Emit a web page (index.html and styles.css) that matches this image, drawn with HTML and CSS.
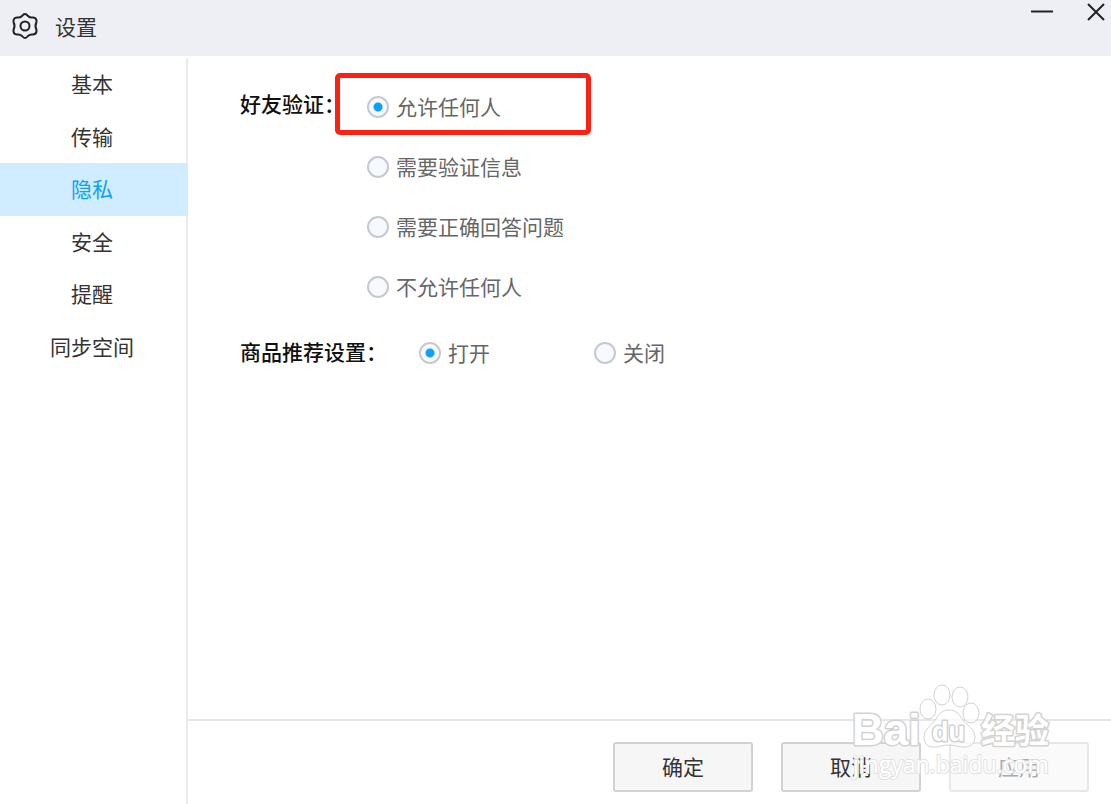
FILE: index.html
```html
<!DOCTYPE html>
<html lang="zh-CN">
<head>
  <meta charset="UTF-8" />
  <meta name="viewport" content="width=device-width, initial-scale=1.0" />
  <title>设置</title>
  <link rel="stylesheet" href="styles.css">
</head>
<body>
  <div class="window">
    <header class="titlebar">
      <svg class="gear" viewBox="0 0 28 28" aria-hidden="true">
        <path d="M11 4Q14 0 17 4Q19 6 22 5.500Q26 6 25.500 10Q23.500 14 25.500 18Q26 22 22 22.500Q19 22 17 24Q14 28 11 24Q9 22 6 22.500Q2 22 2.500 18Q4.500 14 2.500 10Q2 6 6 5.500Q9 6 11 4z" />
        <circle cx="14" cy="14" r="4.500" />
      </svg>
      <h1>设置</h1>
      <div class="window-buttons">
        <button type="button" aria-label="最小化">
          <svg viewBox="0 0 24 24"><path d="M1 11.500h22" /></svg>
        </button>
        <button type="button" aria-label="关闭窗口">
          <svg viewBox="0 0 24 24"><path d="M4 4l16 16M20 4L4 20" /></svg>
        </button>
      </div>
    </header>

    <div class="main">
      <nav class="sidebar">
        <div class="menu">
          <a href="#basic">基本</a>
          <a href="#transfer">传输</a>
          <a href="#privacy" class="active">隐私</a>
          <a href="#security">安全</a>
          <a href="#remind">提醒</a>
          <a href="#sync">同步空间</a>
        </div>
      </nav>

      <form class="panel">
        <div class="content">
          <div class="group" role="radiogroup" aria-labelledby="verify-label">
            <span class="group-label" id="verify-label">好友验证：</span>
            <div class="options">
              <label class="option highlight"><input type="radio" name="verify" checked /><span>允许任何人</span></label>
              <label class="option"><input type="radio" name="verify" /><span>需要验证信息</span></label>
              <label class="option"><input type="radio" name="verify" /><span>需要正确回答问题</span></label>
              <label class="option"><input type="radio" name="verify" /><span>不允许任何人</span></label>
            </div>
          </div>
          <div class="group inline" role="radiogroup" aria-labelledby="goods-label">
            <span class="group-label" id="goods-label">商品推荐设置：</span>
            <div class="options">
              <label class="option"><input type="radio" name="goods" checked /><span>打开</span></label>
              <label class="option"><input type="radio" name="goods" /><span>关闭</span></label>
            </div>
          </div>
        </div>

        <footer class="actions">
          <button type="button">确定</button>
          <button type="button">取消</button>
          <button type="button" disabled>应用</button>
        </footer>
      </form>
    </div>

    <svg class="watermark" viewBox="0 0 204 100" aria-hidden="true">
      <ellipse cx="78" cy="27" rx="8" ry="10" />
      <ellipse cx="92" cy="13" rx="8" ry="10" />
      <ellipse cx="110" cy="15" rx="8" ry="10" />
      <ellipse cx="121" cy="31" rx="8" ry="10" />
      <path d="M99 28c7 0 10 4 13 9 4 6 13 10 13 18 0 7-5 10-11 10-5 0-9-2-15-2s-10 2-15 2c-6 0-10-3-10-10 0-8 8-12 12-18 3-5 6-9 13-9z" />
      <text class="brand" x="2" y="63">Bai</text>
      <text class="brand-small" x="82" y="59">du</text>
      <text class="brand-cn" x="131" y="61">经验</text>
      <text class="site" x="3" y="91">jingyan.baidu.com</text>
    </svg>
  </div>
</body>
</html>
```
FILE: styles.css
```css
*, *::after { box-sizing: border-box; margin: 0; padding: 0; }
body { font-family: "Noto Sans CJK SC", sans-serif; font-size: 21px; line-height: 32px; color: #333; background: #fff; }
button, input { font: inherit; color: inherit; }

.window { position: relative; display: flex; flex-direction: column; min-height: 100vh; }

.titlebar { display: flex; align-items: center; height: 56px; padding: 0 3px 4px 11px; background: #eeeff5; }
.titlebar h1 { flex: 1; margin-left: 16px; font-size: 21px; font-weight: 400; }
.gear { width: 28px; height: 28px; fill: none; stroke: #222; stroke-width: 2; }
.window-buttons { display: flex; align-self: flex-start; gap: 30px; }
.window-buttons button { width: 24px; height: 24px; border: none; background: none; cursor: pointer; }
.window-buttons svg { display: block; width: 24px; height: 24px; fill: none; stroke: #222; stroke-width: 2; }

.main { flex: 1; display: flex; padding-top: 2px; }
.sidebar { width: 188px; border-right: 2px solid #ebebeb; }
.menu { display: flex; flex-direction: column; height: 315px; margin-right: -2px; }
.menu a { flex: 1; display: flex; align-items: center; justify-content: center; padding: 0 4px 2px 0; color: #333; text-decoration: none; }
.menu a.active { background: #d0edff; color: #0aa1fc; }

.panel { flex: 1; display: flex; flex-direction: column; }
.content { flex: 1; padding: 19px 0 0 52px; }
.group { display: flex; }
.group-label { width: 127px; line-height: 52px; color: #111; font-weight: 500; white-space: nowrap; }
.option { position: relative; display: flex; align-items: center; height: 60px; color: #666; cursor: pointer; }
.option span { padding-bottom: 3px; }
.option input { appearance: none; width: 22px; height: 22px; margin-right: 7px; border: 2px solid #c6c9cf; border-radius: 50%; background: #f6f9ff; }
.option input:checked { background: radial-gradient(circle, #0aa1fc 4px, #f6f9ff 5px); }
.highlight::after { content: ""; position: absolute; top: -4px; left: -32px; width: 256px; height: 62px; border: 5px solid #ff2013; border-radius: 5px; }
.inline { margin-top: 6px; }
.inline .group-label { width: 179px; line-height: 56px; }
.inline .options { display: flex; }
.inline .option { width: 175px; }

.actions { display: flex; justify-content: flex-end; gap: 28px; padding: 21px 22px 12px; border-top: 2px solid #e6e6e6; }
.actions button { width: 140px; height: 50px; padding-bottom: 2px; border: 2px solid #d2d2d2; border-radius: 3px; background: #f6f6f6; color: #333; cursor: pointer; }
.actions button:disabled { border-color: #e8e8e8; background: #fafafa; color: #aaa; cursor: default; }

.watermark { position: absolute; right: 57px; bottom: 22px; width: 204px; height: 100px; fill: rgba(255,255,255,0.7); stroke: #d2d2d2; stroke-width: 1; pointer-events: none; }
.watermark text { font-family: "Liberation Sans", "Noto Sans CJK SC", sans-serif; font-weight: 700; fill: #fff; stroke-width: 3; stroke-linejoin: round; paint-order: stroke; }
.watermark .brand { font-size: 44px; }
.watermark .brand-small { font-size: 27px; }
.watermark .brand-cn { font-size: 34px; }
.watermark .site { font-family: "Open Sans", sans-serif; font-size: 23px; font-weight: 400; stroke: #e2e2e2; stroke-width: 2; }
```
